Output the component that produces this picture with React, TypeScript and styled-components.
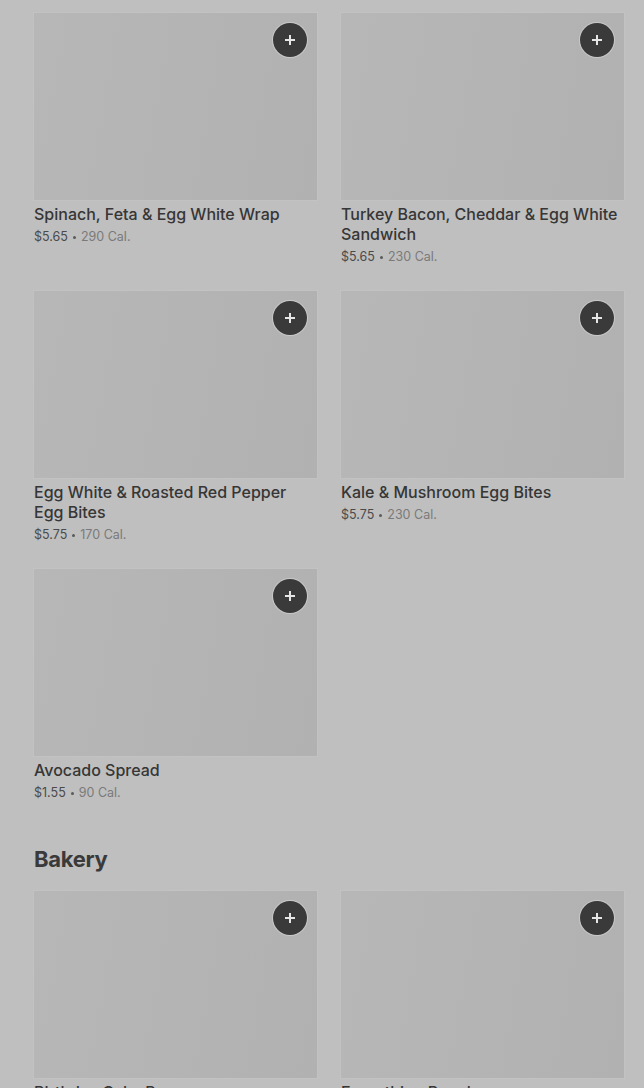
import React from "react";
import styled, { createGlobalStyle } from "styled-components";

const GlobalStyle = createGlobalStyle`
  html, body {
    margin: 0;
    padding: 0;
    background: #bfbfbf;
  }
  body {
    font-family: "Inter", "Noto Sans", "Liberation Sans", sans-serif;
    -webkit-font-smoothing: antialiased;
  }
`;

interface Item {
  name: string;
  price?: string;
  cal?: string;
}

const breakfast: Item[] = [
  { name: "Spinach, Feta & Egg White Wrap", price: "$5.65", cal: "290 Cal." },
  { name: "Turkey Bacon, Cheddar & Egg White Sandwich", price: "$5.65", cal: "230 Cal." },
  { name: "Egg White & Roasted Red Pepper Egg Bites", price: "$5.75", cal: "170 Cal." },
  { name: "Kale & Mushroom Egg Bites", price: "$5.75", cal: "230 Cal." },
  { name: "Avocado Spread", price: "$1.55", cal: "90 Cal." },
];

const bakery: Item[] = [
  { name: "Birthday Cake Pop", price: "$2.95", cal: "170 Cal." },
  { name: "Everything Bagel", price: "$2.45", cal: "290 Cal." },
];

const Page = styled.div`
  padding: 13px 20px 40px 34px;
  display: flex;
  flex-direction: column;
`;

const Section = styled.section`
  display: flex;
  flex-direction: column;
  & + & {
    margin-top: 42px;
  }
`;

const Heading = styled.h2`
  margin: 0 0 18px;
  font-size: 22px;
  line-height: 28px;
  font-weight: 700;
  color: #3a3a3a;
  letter-spacing: -0.3px;
`;

const Grid = styled.div`
  display: grid;
  grid-template-columns: 1fr 1fr;
  column-gap: 24px;
  row-gap: 24px;
`;

const Card = styled.div`
  display: flex;
  flex-direction: column;
`;

const ImageBox = styled.div`
  position: relative;
  height: 187px;
  background: linear-gradient(100deg, #b7b7b7 0%, #b4b4b4 50%, #b1b1b1 100%);
  box-shadow: 0 0 0 1px rgba(200, 200, 200, 0.35);
`;

const AddButton = styled.button`
  position: absolute;
  top: 10px;
  right: 10px;
  width: 34px;
  height: 34px;
  border-radius: 50%;
  border: none;
  padding: 0;
  background: #3a3a3a;
  box-shadow: 0 0 0 1px rgba(210, 210, 210, 0.7);
  display: flex;
  align-items: center;
  justify-content: center;
  cursor: pointer;
`;

const Title = styled.div`
  margin-top: 4px;
  font-size: 16px;
  line-height: 20px;
  font-weight: 500;
  color: #363636;
`;

const Meta = styled.div`
  margin-top: 3px;
  font-size: 12.5px;
  line-height: 20px;
  color: #4a4a4a;
  display: flex;
  align-items: center;
  gap: 4px;
`;

const Cal = styled.span`
  color: #7a7a7a;
`;

const Dot = styled.span`
  width: 3px;
  height: 3px;
  border-radius: 50%;
  background: #5a5a5a;
  margin: 1px 1px 0;
`;

const PlusIcon = () => (
  <svg width="12" height="12" viewBox="0 0 12 12">
    <path d="M6 1v10M1 6h10" stroke="#e6e6e6" strokeWidth="2" />
  </svg>
);

const ItemCard: React.FC<{ item: Item }> = ({ item }) => (
  <Card>
    <ImageBox>
      <AddButton aria-label="Add">
        <PlusIcon />
      </AddButton>
    </ImageBox>
    <Title>{item.name}</Title>
    <Meta>
      <span>{item.price}</span>
      <Dot />
      <Cal>{item.cal}</Cal>
    </Meta>
  </Card>
);

export default function App() {
  return (
    <>
      <GlobalStyle />
      <Page>
        <Section>
          <Grid>
            {breakfast.map((item) => (
              <ItemCard key={item.name} item={item} />
            ))}
          </Grid>
        </Section>
        <Section>
          <Heading>Bakery</Heading>
          <Grid>
            {bakery.map((item) => (
              <ItemCard key={item.name} item={item} />
            ))}
          </Grid>
        </Section>
      </Page>
    </>
  );
}
